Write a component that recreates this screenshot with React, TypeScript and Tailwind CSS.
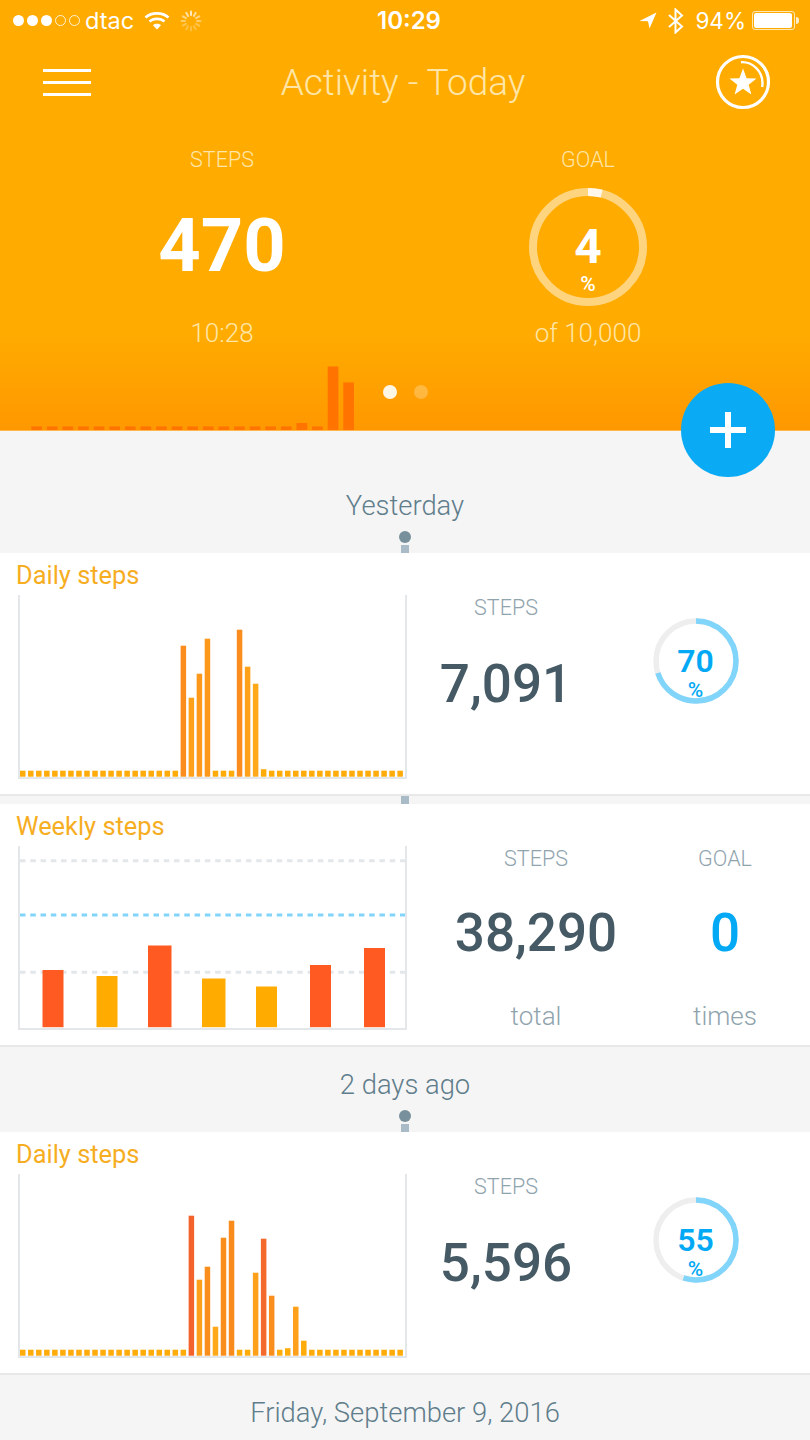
const DAILY_ONE: Record<number, [number, string]> = {
  20: [131, '#fb8c1e'],
  21: [79, '#ffa01a'],
  22: [103, '#fd981a'],
  23: [138, '#fd981a'],
  27: [147, '#fb8c1e'],
  28: [110, '#ffa01a'],
  29: [93, '#ffa81a'],
  30: [7.5, '#ffab0a'],
}

const DAILY_TWO: Record<number, [number, string]> = {
  21: [140, '#f4622b'],
  22: [76, '#ffa01a'],
  23: [89, '#f98e1c'],
  24: [29, '#ffa81a'],
  25: [118, '#f98e1c'],
  26: [135, '#f98a1c'],
  29: [83, '#ffa01a'],
  30: [117, '#f46a2c'],
  31: [60, '#f98e1c'],
  33: [7.5, '#ffab0a'],
  34: [49, '#ffa01a'],
  35: [15, '#ffab0a'],
}

const WEEKLY = [
  { x: 42.5, w: 21, top: 124, color: '#ff5a22' },
  { x: 96.5, w: 21, top: 130, color: '#ffab00' },
  { x: 148, w: 23.5, top: 99.5, color: '#ff5a22' },
  { x: 202, w: 23.5, top: 132.5, color: '#ffab00' },
  { x: 256, w: 21, top: 140.5, color: '#ffab00' },
  { x: 310, w: 21, top: 119, color: '#ff5a22' },
  { x: 364, w: 21, top: 102, color: '#ff5a22' },
]

const Axes = () => (
  <path d="M19 0V183H406V0" fill="none" stroke="#e3e7ea" strokeWidth="2" />
)

const DailyChart = ({ bars }: { bars: Record<number, [number, string]> }) => (
  <svg width="408" height="185" className="shrink-0">
    <Axes />
    {Array.from({ length: 48 }).map((_, i) => {
      const bar = bars[i]
      const h = bar ? bar[0] : 6
      return (
        <rect
          key={i}
          x={20 + i * 8.03}
          y={181.7 - h}
          width={5.5}
          height={h}
          fill={bar ? bar[1] : '#ffab0a'}
        />
      )
    })}
  </svg>
)

const WeeklyChart = () => (
  <svg width="408" height="185" className="shrink-0">
    <Axes />
    <g strokeWidth="3" strokeDasharray="5.5 4.77" fill="none">
      <path d="M20 14.7H405" stroke="#e3e7ea" />
      <path d="M20 69H405" stroke="#81d4fa" />
      <path d="M20 126.3H405" stroke="#e3e7ea" />
    </g>
    {WEEKLY.map((b) => (
      <rect key={b.x} x={b.x} y={b.top} width={b.w} height={181.2 - b.top} fill={b.color} />
    ))}
  </svg>
)

const SmallGauge = ({ value }: { value: number }) => {
  const c = 2 * Math.PI * 40
  return (
    <div className="relative w-[86px] h-[86px]">
      <svg width="86" height="86" className="-rotate-90">
        <circle cx="43" cy="43" r="40" fill="none" stroke="#eeeeee" strokeWidth="5.5" />
        <circle
          cx="43"
          cy="43"
          r="40"
          fill="none"
          stroke="#81d4fa"
          strokeWidth="5.5"
          strokeDasharray={`${(c * value) / 100} ${c}`}
        />
      </svg>
      <div className="absolute inset-x-0 top-[27px] text-center text-[32px] leading-[32px] font-semibold text-[#03a9f4]">
        {value}
      </div>
      <div className="absolute inset-x-0 top-[60px] text-center text-[21px] leading-[24px] font-medium text-[#03a9f4]">
        %
      </div>
    </div>
  )
}

const Label = ({ children }: { children: string }) => (
  <div className="h-[25px] leading-[25px] text-[21.5px] font-light text-[#90a4ae] text-center">{children}</div>
)

const Connector = () => (
  <div className="w-[8px] h-[8px] bg-[#a9bbc6]" />
)

const Section = ({ title, height }: { title: string; height: string }) => (
  <div className={`${height} flex flex-col items-center justify-end`}>
    <div className="h-[36px] leading-[36px] text-[27.4px] font-light text-[#607d8b]">{title}</div>
    <div className="mt-[7px] w-[12px] h-[12px] rounded-full bg-[#78909c]" />
    <div className="mt-[2px]">
      <Connector />
    </div>
  </div>
)

const DailyCard = ({ bars, steps, percent }: { bars: Record<number, [number, string]>; steps: string; percent: number }) => (
  <div className="h-[243px] bg-white border-b-2 border-[#e8e8e8]">
    <div className="h-[42px] pl-4 pt-[5px] text-[25.4px] leading-[34px] text-[#f6ad1f]">Daily steps</div>
    <div className="flex">
      <DailyChart bars={bars} />
      <div className="w-[196px]">
        <Label>STEPS</Label>
        <div className="h-[130px] flex items-center justify-center text-[53px] font-medium text-[#455a64]">{steps}</div>
      </div>
      <div className="w-[183px] flex justify-center pt-[23px]">
        <SmallGauge value={percent} />
      </div>
    </div>
  </div>
)

const WeeklyStat = ({ label, value, unit, width, color }: { label: string; value: string; unit: string; width: string; color: string }) => (
  <div className={width}>
    <Label>{label}</Label>
    <div className={`h-[126px] flex items-center justify-center text-[53px] font-medium ${color}`}>{value}</div>
    <div className="h-[39px] leading-[39px] text-center text-[26px] font-light text-[#90a4ae]">{unit}</div>
  </div>
)

const StatusBar = () => (
  <div className="h-[40px] pt-[1px] flex items-center justify-between text-white font-[family-name:Inter,sans-serif]">
    <div className="flex-1 flex items-center pl-[13px]">
      <div className="flex items-center gap-[3px]">
        <div className="w-[11px] h-[11px] rounded-full bg-white" />
        <div className="w-[11px] h-[11px] rounded-full bg-white" />
        <div className="w-[11px] h-[11px] rounded-full bg-white" />
        <div className="w-[11px] h-[11px] rounded-full border border-white/80" />
        <div className="w-[11px] h-[11px] rounded-full border border-white/80" />
      </div>
      <span className="ml-[5px] text-[23.5px] leading-[38px]">dtac</span>
      <svg width="26" height="20" viewBox="0 0 26 20" className="ml-[10px]" fill="none" stroke="#fff" strokeWidth="2.6">
        <path d="M1.5 6.5C7.5 1 18.5 1 24.5 6.5" />
        <path d="M5.5 10.5C9.5 7 16.5 7 20.5 10.5" />
        <path d="M13 18.5L9 14.2C11.2 12.4 14.8 12.4 17 14.2Z" fill="#fff" stroke="none" />
      </svg>
      <svg width="22" height="22" viewBox="0 0 22 22" className="ml-[10px]" stroke="#fff" strokeWidth="2" strokeLinecap="round">
        <path opacity="0.75" d="M11 1.5V5" />
        <path opacity="0.6" d="M15.7 2.8L13.9 5.9" />
        <path opacity="0.5" d="M19.2 6.3L16.1 8.1" />
        <path opacity="0.4" d="M20.5 11H17" />
        <path opacity="0.3" d="M19.2 15.7L16.1 13.9" />
        <path opacity="0.25" d="M15.7 19.2L13.9 16.1" />
        <path opacity="0.25" d="M11 20.5V17" />
        <path opacity="0.25" d="M6.3 19.2L8.1 16.1" />
        <path opacity="0.3" d="M2.8 15.7L5.9 13.9" />
        <path opacity="0.4" d="M1.5 11H5" />
        <path opacity="0.5" d="M2.8 6.3L5.9 8.1" />
        <path opacity="0.65" d="M6.3 2.8L8.1 5.9" />
      </svg>
    </div>
    <div className="ml-[6px] text-[24px] font-semibold leading-[38px]">10:29</div>
    <div className="flex-1 flex items-center justify-end pr-[11px]">
      <svg width="18" height="17" viewBox="0 0 18 17">
        <path d="M17.5 0.5L0.5 9L9 9.3L10.5 16.5Z" fill="#fff" />
      </svg>
      <svg width="16" height="26" viewBox="0 0 16 26" className="ml-[11px]" fill="none" stroke="#fff" strokeWidth="2">
        <path d="M1 7L14 18.5L7.5 24.5V1.5L14 7.5L1 19" />
      </svg>
      <span className="ml-[11px] text-[22.5px] leading-[38px]">94%</span>
      <div className="ml-[6px] w-[43px] h-[19px] rounded-[3px] border border-white/70 p-[1px]">
        <div className="w-[38px] h-full rounded-[2px] bg-white" />
      </div>
      <div className="ml-[1px] w-[3px] h-[7px] rounded-r-sm bg-white/80" />
    </div>
  </div>
)

const NavBar = () => (
  <div className="h-[84px] flex items-center justify-between pl-[43px] pr-[39px]">
    <div className="w-[48px] flex flex-col gap-[9px]">
      <div className="h-[3px] bg-white" />
      <div className="h-[3px] bg-white" />
      <div className="h-[3px] bg-white" />
    </div>
    <div className="pt-[2px] text-[37px] leading-[44px] font-light text-[#ffe6a8]">Activity - Today</div>
    <svg width="56" height="56" viewBox="0 0 56 56" fill="none" stroke="#fff">
      <circle cx="28" cy="28" r="25.5" strokeWidth="3.2" />
      <path d="M26 8.2C37.5 7.5 47.5 17 47.5 29C47.5 30.5 47.4 31.5 47.2 33" strokeWidth="2.4" />
      <path d="M28 14.5L31.6 24.2L41.5 24.5L33.7 30.7L36.4 40.5L28 34.8L19.6 40.5L22.3 30.7L14.5 24.5L24.4 24.2Z" fill="#fff" stroke="none" />
    </svg>
  </div>
)

const GoalGauge = () => {
  const c = 2 * Math.PI * 55
  return (
    <div className="relative w-[118px] h-[118px]">
      <svg width="118" height="118" className="-rotate-90">
        <circle cx="59" cy="59" r="55" fill="none" stroke="#ffd47f" strokeWidth="8" />
        <circle cx="59" cy="59" r="55" fill="none" stroke="#fff8ea" strokeWidth="8" strokeDasharray={`${c * 0.04} ${c}`} />
      </svg>
      <div className="absolute inset-x-0 top-[39px] text-center text-[48px] leading-[40px] font-bold text-white">4</div>
      <div className="absolute inset-x-0 top-[84px] text-center text-[21px] leading-[24px] font-medium text-white">%</div>
    </div>
  )
}

const HeaderChart = () => (
  <div className="relative mt-auto h-[64px]">
    <svg width="400" height="64" className="absolute left-0 bottom-0">
      {Array.from({ length: 21 }).map((_, i) => {
        const h = i === 19 ? 63.5 : i === 20 ? 47.5 : i === 17 ? 7 : 3.5
        return <rect key={i} x={31.3 + i * 15.6} y={64 - h} width={10.7} height={h} fill="#ff7300" />
      })}
    </svg>
    <div className="absolute left-[383px] top-[19px] flex gap-[17px]">
      <div className="w-[14px] h-[14px] rounded-full bg-[#fff6e6]" />
      <div className="w-[14px] h-[14px] rounded-full bg-white/25" />
    </div>
  </div>
)

const App = () => {
  return (
    <div className="relative w-[810px] h-[1440px] overflow-hidden bg-[#f5f5f5] font-[family-name:Roboto,sans-serif]">
      <div className="h-[431px] flex flex-col border-b border-[#ffb84d] bg-[linear-gradient(to_bottom,#ffab00_78%,#ff9800_100%)]">
        <StatusBar />
        <NavBar />
        <div className="flex pt-[21px]">
          <div className="w-[444px] text-center">
            <div className="h-[30px] leading-[30px] text-[21.5px] font-light text-[#ffe6a8]">STEPS</div>
            <div className="h-[140px] flex items-center justify-center text-[74px] font-bold text-white">470</div>
            <div className="mt-[3px] h-[30px] leading-[30px] text-[26px] font-light text-[#ffe6a8]">10:28</div>
          </div>
          <div className="w-[288px] flex flex-col items-center">
            <div className="h-[30px] leading-[30px] text-[21.5px] font-light text-[#ffe6a8]">GOAL</div>
            <div className="h-[140px] pt-[13px]">
              <GoalGauge />
            </div>
            <div className="mt-[3px] h-[30px] leading-[30px] text-[26px] font-light text-[#ffe6a8]">of 10,000</div>
          </div>
        </div>
        <HeaderChart />
      </div>

      <button className="absolute left-[681px] top-[383px] w-[94px] h-[94px] rounded-full bg-[#0aaaf5] flex items-center justify-center">
        <svg width="38" height="38" viewBox="0 0 38 38" fill="#fff">
          <path d="M16 1H22V16H37V22H22V37H16V22H1V16H16Z" />
        </svg>
      </button>

      <Section title="Yesterday" height="h-[122px]" />
      <DailyCard bars={DAILY_ONE} steps="7,091" percent={70} />

      <div className="h-[8px] flex justify-center">
        <Connector />
      </div>

      <div className="h-[243px] bg-white border-b-2 border-[#e8e8e8]">
        <div className="h-[42px] pl-4 pt-[5px] text-[25.4px] leading-[34px] text-[#f6ad1f]">Weekly steps</div>
        <div className="flex">
          <WeeklyChart />
          <WeeklyStat label="STEPS" value="38,290" unit="total" width="w-[256px]" color="text-[#455a64]" />
          <WeeklyStat label="GOAL" value="0" unit="times" width="w-[122px]" color="text-[#03a9f4]" />
        </div>
      </div>

      <Section title="2 days ago" height="h-[85px]" />
      <DailyCard bars={DAILY_TWO} steps="5,596" percent={55} />

      <div className="h-[65px] flex items-center justify-center pt-[12px] text-[27.4px] font-light text-[#607d8b]">
        Friday, September 9, 2016
      </div>
    </div>
  )
}

export default App
